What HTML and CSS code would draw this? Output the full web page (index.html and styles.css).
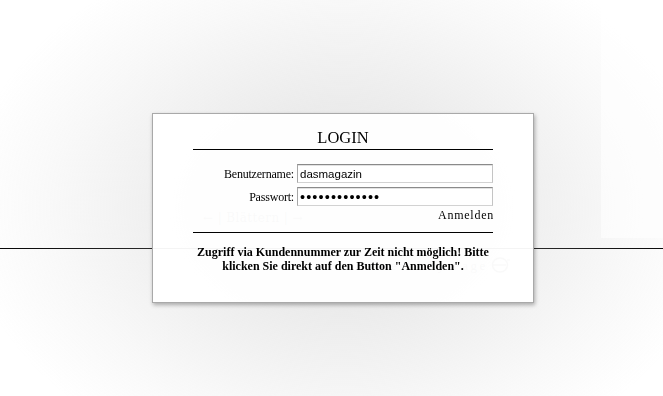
FILE: index.html
```html
<!DOCTYPE html>
<html lang="de">
<head>
<meta charset="utf-8">
<title>Login</title>
<link rel="stylesheet" href="styles.css">
</head>
<body>
<div class="page">
  <div class="top">
    <nav class="pager">← | Blättern | →</nav>
  </div>
  <div class="footer">
    <span class="powered">Powered by Page</span>
    <svg class="logo" width="20" height="18" viewBox="0 0 20 18"><ellipse cx="9" cy="9" rx="7.5" ry="7" fill="none" stroke="currentColor" stroke-width="1.4"/><path d="M2 9h13" stroke="currentColor" stroke-width="1.4"/><path d="M16 4h3" stroke="currentColor" stroke-width="1"/></svg>
  </div>
</div>
<div class="shade"></div>
<div class="side"></div>
<div class="dialog">
  <h1 class="title">LOGIN</h1>
  <form class="form">
    <label class="label" for="user">Benutzername:</label>
    <input class="field" id="user" type="text" value="dasmagazin">
    <label class="label" for="pass">Passwort:</label>
    <input class="field pw" id="pass" type="password" value="dasmagazin123">
    <div class="actions"><button class="submit" type="button">Anmelden</button></div>
  </form>
  <div class="sep"></div>
  <p class="msg">Zugriff via Kundennummer zur Zeit nicht möglich! Bitte klicken Sie direkt auf den Button "Anmelden".</p>
</div>
</body>
</html>
```
FILE: styles.css
```css
html, body {
  margin: 0;
  padding: 0;
}
body {
  width: 663px;
  height: 396px;
  overflow: hidden;
  background: #fff;
  font-family: "Liberation Serif", "Times New Roman", serif;
  color: #000;
}
.page {
  height: 396px;
}
.top {
  height: 249px;
  box-sizing: border-box;
  border-bottom: 1px solid #000;
  display: flex;
  flex-direction: column;
  justify-content: flex-end;
  padding: 0 0 22px 203px;
}
.pager {
  font-family: "DejaVu Serif", "Liberation Serif", serif;
  font-size: 12px;
  line-height: 15px;
  letter-spacing: 0.4px;
  color: #777;
}
.footer {
  display: flex;
  align-items: center;
  padding: 7px 0 0 360px;
  color: #777;
}
.powered {
  font-size: 13px;
  line-height: 15px;
  letter-spacing: 2.5px;
}
.logo {
  margin-left: 3px;
}
.shade {
  position: fixed;
  inset: 0;
  background: radial-gradient(ellipse 400px 290px at 343px 208px,
    rgba(190,190,190,0.38) 0%,
    rgba(190,190,190,0.3) 35%,
    rgba(190,190,190,0.1) 72%,
    rgba(190,190,190,0) 95%);
}
.side {
  position: absolute;
  right: 0;
  top: 0;
  width: 62px;
  height: 238px;
  background: rgba(255,255,255,0.6);
}
.dialog {
  position: absolute;
  left: 152px;
  top: 113px;
  width: 382px;
  height: 190px;
  box-sizing: border-box;
  border: 1px solid #a9a9a9;
  box-shadow: 1px 2px 4px rgba(0,0,0,0.3);
  background: rgba(255,255,255,0.95);
  padding: 14px 40px 0 40px;
}
.title {
  margin: 0;
  font-size: 16.5px;
  line-height: 20px;
  font-weight: normal;
  text-align: center;
  padding-bottom: 1px;
  border-bottom: 1px solid #000;
}
.form {
  margin: 14px 0 0 0;
  display: grid;
  grid-template-columns: 101px 196px;
  column-gap: 3px;
  row-gap: 4px;
  align-items: start;
}
.label {
  font-size: 12px;
  line-height: 16px;
  padding-top: 2px;
  letter-spacing: -0.2px;
  text-align: right;
  white-space: nowrap;
}
.field {
  box-sizing: border-box;
  height: 19px;
  width: 196px;
  margin: 0;
  padding: 0 2px;
  border: 1px solid;
  border-color: #8a8a8a #c4c4c4 #d2d2d2 #a6a6a6;
  box-shadow: inset 0 1px 0 #e2e2e2;
  background: #fff;
  font-family: "Liberation Sans", Arial, sans-serif;
  font-size: 11.5px;
  color: #000;
  outline: none;
}
.pw {
  font-size: 14.5px;
  letter-spacing: 1.1px;
}
.actions {
  grid-column: 1 / 3;
  display: flex;
  justify-content: flex-end;
  margin-top: -2px;
}
.submit {
  margin: 0;
  padding: 0;
  border: 0;
  background: none;
  font-family: "Liberation Serif", "Times New Roman", serif;
  font-size: 12px;
  line-height: 14px;
  letter-spacing: 0.75px;
  color: #000;
  margin-right: -1px;
}
.sep {
  margin-top: 10px;
  border-top: 1px solid #000;
}
.msg {
  margin: 12px 0 0 0;
  font-size: 12px;
  line-height: 14px;
  font-weight: bold;
  text-align: center;
}
```
